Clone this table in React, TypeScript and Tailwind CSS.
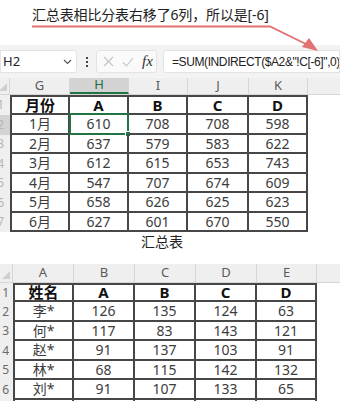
import React from "react";

const SANS = '"Noto Sans","Noto Sans CJK SC",sans-serif';

const top = {
  letters: ["G", "H", "I", "J", "K"],
  widths: [60, 59, 59, 61, 59],
  head: ["月份", "A", "B", "C", "D"],
  rows: [
    ["1月", "610", "708", "708", "598"],
    ["2月", "637", "579", "583", "622"],
    ["3月", "612", "615", "653", "743"],
    ["4月", "547", "707", "674", "609"],
    ["5月", "658", "626", "625", "623"],
    ["6月", "627", "601", "670", "550"],
  ],
};

const bottom = {
  letters: ["A", "B", "C", "D", "E"],
  widths: [61, 61, 61, 61, 60],
  head: ["姓名", "A", "B", "C", "D"],
  rows: [
    ["李*", "126", "135", "124", "63"],
    ["何*", "117", "83", "143", "121"],
    ["赵*", "91", "137", "103", "91"],
    ["林*", "68", "115", "142", "132"],
    ["刘*", "91", "107", "133", "65"],
    ["", "", "", "", ""],
  ],
};

function Corner() {
  return (
    <svg width="8" height="8" viewBox="0 0 8 8" className="absolute right-[2px] bottom-[3px]">
      <polygon points="8,0 8,8 0,8" fill="#cfcfcf" />
    </svg>
  );
}

function ColHeader({
  letters,
  widths,
  left,
  sel,
  h,
}: {
  letters: string[];
  widths: number[];
  left: number;
  sel?: number;
  h: number;
}) {
  return (
    <div className="flex bg-[#efefef] border-b border-[#d6d6d6]" style={{ height: h }}>
      <div className="relative shrink-0 border-r border-[#d6d6d6]" style={{ width: left }}>
        <Corner />
      </div>
      {letters.map((l, i) => (
        <div
          key={l}
          className={
            "shrink-0 flex items-center justify-center text-[13px] border-r border-[#d6d6d6] " +
            (i === sel
              ? "bg-[#d3d3d3] text-[#1e6e42] border-b-2 border-b-[#217346]"
              : "text-[#5a5a5a]")
          }
          style={{ width: widths[i] }}
        >
          {l}
        </div>
      ))}
      <div className="flex-1" />
    </div>
  );
}

function Table({
  data,
  left,
  rowH,
  headH,
  rowNums,
  selRow,
  selCol,
}: {
  data: typeof top;
  left: number;
  rowH: number;
  headH: number;
  rowNums: "hidden" | "shown";
  selRow?: number;
  selCol?: number;
}) {
  const all = [data.head, ...data.rows];
  return (
    <div className="flex flex-col">
      {all.map((row, r) => (
        <div key={r} className="flex shrink-0" style={{ height: r === 0 ? headH : rowH }}>
          <div
            className={
              "shrink-0 flex items-center justify-end overflow-hidden text-[12px] " +
              (rowNums === "hidden" ? "pr-[6px] text-[#b5b5b5] " : "pr-[4px] text-[#6a6a6a] ") +
              (r === selRow ? "bg-[#d3d3d3]" : "bg-[#efefef]")
            }
            style={{ width: left }}
          >
            {r + 1}
          </div>
          {row.map((c, i) => (
            <div
              key={i}
              className={
                "relative shrink-0 flex items-center justify-center border-r-2 border-b-2 border-[#474747] " +
                (r === 0 ? "border-t-2 font-bold text-[15px] text-[#111] " : "text-[14px] text-[#3c3c3c] ") +
                (i === 0 ? "border-l-2" : "")
              }
              style={{ width: data.widths[i] }}
            >
              {c}
              {r === selRow && i === selCol && (
                <>
                  <div className="absolute -left-[1px] -top-[2px] -right-[2px] -bottom-[2px] border-2 border-[#217346]" />
                  <div className="absolute -right-[4px] -bottom-[4px] w-[6px] h-[6px] bg-[#217346] border border-white" />
                </>
              )}
            </div>
          ))}
        </div>
      ))}
    </div>
  );
}

export default function App() {
  return (
    <div
      className="relative w-[340px] h-[401px] bg-white overflow-hidden"
      style={{ fontFamily: SANS }}
    >
      <svg
        className="absolute left-0 top-0 pointer-events-none z-10"
        width="340"
        height="60"
        viewBox="0 0 340 60"
      >
        <path d="M32 26.5 H270 L310 46" fill="none" stroke="#e27171" strokeWidth="1.8" />
        <polygon points="318,51 302,47 309,38" fill="#e27171" />
      </svg>

      <div className="h-[45px] pl-[32px] pt-[6px] text-[14px] leading-[18px] text-[#222] tracking-[-0.15px]">
        汇总表相比分表右移了6列，所以是[-6]
      </div>

      <div className="h-[33px] bg-[#f3f3f3] flex items-center">
        <div className="w-[77px] h-[23px] bg-white border border-[#e3e3e3] rounded-r-[3px] flex items-center pl-[2px] pr-[4px] text-[13px] text-[#222]">
          <span className="flex-1">H2</span>
          <svg width="9" height="6" viewBox="0 0 9 6">
            <path d="M1 1 L4.5 4.5 L8 1" fill="none" stroke="#555" strokeWidth="1.2" />
          </svg>
        </div>
        <div className="w-[19px] flex flex-col items-center gap-[2px]">
          <div className="w-[2px] h-[2px] bg-[#444]" />
          <div className="w-[2px] h-[2px] bg-[#444]" />
          <div className="w-[2px] h-[2px] bg-[#444]" />
        </div>
        <div className="w-[61px] h-[23px] bg-[#fafafa] border border-[#e3e3e3] rounded-[3px] flex items-center pl-[6px]">
          <svg width="11" height="11" viewBox="0 0 11 11">
            <path d="M1 1 L10 10 M10 1 L1 10" stroke="#c4c4c4" strokeWidth="1.1" />
          </svg>
          <svg width="12" height="10" viewBox="0 0 12 10" className="ml-[8px]">
            <path d="M1 5.5 L4.5 9 L11 1" fill="none" stroke="#c4c4c4" strokeWidth="1.1" />
          </svg>
          <span
            className="ml-[8px] italic text-[15px] text-[#333]"
            style={{ fontFamily: '"Liberation Serif",serif' }}
          >
            fx
          </span>
        </div>
        <div
          className="ml-[6px] flex-1 h-[23px] bg-white border border-[#e3e3e3] rounded-l-[3px] flex items-center pl-[8px] whitespace-nowrap overflow-hidden text-[12px] tracking-[-0.4px] text-[#222]"
          style={{ fontFamily: '"Liberation Sans",sans-serif' }}
        >
          =SUM(INDIRECT($A2&amp;"!C[-6]",0))
        </div>
      </div>

      <ColHeader letters={top.letters} widths={top.widths} left={10} sel={1} h={17} />
      <Table data={top} left={10} rowH={19.5} headH={20} rowNums="hidden" selRow={1} selCol={1} />

      <div className="h-[32px] ml-[10px] w-[304px] text-center text-[14px] leading-[20px] text-[#222]">
        汇总表
      </div>

      <ColHeader letters={bottom.letters} widths={bottom.widths} left={13} h={19} />
      <Table data={bottom} left={13} rowH={19.5} headH={19} rowNums="shown" />
    </div>
  );
}
